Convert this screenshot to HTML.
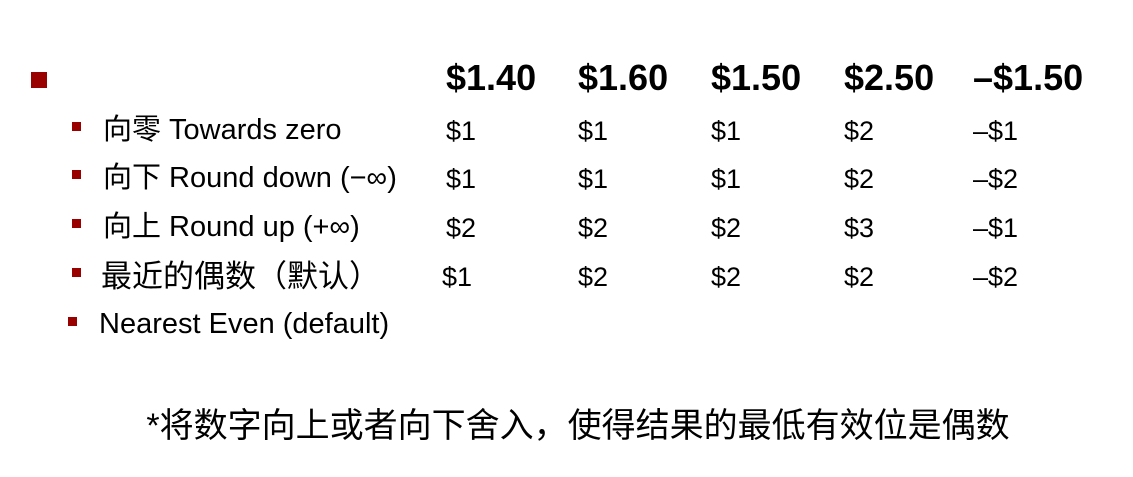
<!DOCTYPE html>
<html><head><meta charset="utf-8"><style>
body{margin:0;width:1133px;height:477px;background:#fff;position:relative;overflow:hidden;font-family:"Liberation Sans","Noto Sans CJK SC",sans-serif;color:#000}
.a{position:absolute;white-space:nowrap;line-height:1}
.h{font-weight:bold;font-size:36px;top:60px}
.r{font-size:29px}
.v{font-size:27px}
.b{position:absolute;background:#990000;width:9px;height:9px}
</style></head><body>
<div class="b" style="left:31px;top:72px;width:16px;height:16px"></div>
<div class="a h" style="left:446px">$1.40</div>
<div class="a h" style="left:578px">$1.60</div>
<div class="a h" style="left:711px">$1.50</div>
<div class="a h" style="left:844px">$2.50</div>
<div class="a h" style="left:973px">–$1.50</div>

<div class="b" style="left:72px;top:122px"></div>
<div class="a r" style="left:103px;top:116px">向零 Towards zero</div>
<div class="b" style="left:72px;top:170px"></div>
<div class="a r" style="left:103px;top:164px">向下 Round down (−∞)</div>
<div class="b" style="left:72px;top:219px"></div>
<div class="a r" style="left:103px;top:213px">向上 Round up (+∞)</div>
<div class="b" style="left:72px;top:268px"></div>
<div class="a r" style="left:101px;top:261px;font-size:31px">最近的偶数（默认）</div>
<div class="b" style="left:68px;top:317px"></div>
<div class="a r" style="left:99px;top:310px">Nearest Even (default)</div>

<div class="a v" style="left:446px;top:118px">$1</div><div class="a v" style="left:578px;top:118px">$1</div><div class="a v" style="left:711px;top:118px">$1</div><div class="a v" style="left:844px;top:118px">$2</div><div class="a v" style="left:973px;top:118px">–$1</div>
<div class="a v" style="left:446px;top:166px">$1</div><div class="a v" style="left:578px;top:166px">$1</div><div class="a v" style="left:711px;top:166px">$1</div><div class="a v" style="left:844px;top:166px">$2</div><div class="a v" style="left:973px;top:166px">–$2</div>
<div class="a v" style="left:446px;top:215px">$2</div><div class="a v" style="left:578px;top:215px">$2</div><div class="a v" style="left:711px;top:215px">$2</div><div class="a v" style="left:844px;top:215px">$3</div><div class="a v" style="left:973px;top:215px">–$1</div>
<div class="a v" style="left:442px;top:264px">$1</div><div class="a v" style="left:578px;top:264px">$2</div><div class="a v" style="left:711px;top:264px">$2</div><div class="a v" style="left:844px;top:264px">$2</div><div class="a v" style="left:973px;top:264px">–$2</div>

<div class="a" style="left:140px;top:409px;font-size:34px;width:876px;text-align:center">*将数字向上或者向下舍入，使得结果的最低有效位是偶数</div>
</body></html>
